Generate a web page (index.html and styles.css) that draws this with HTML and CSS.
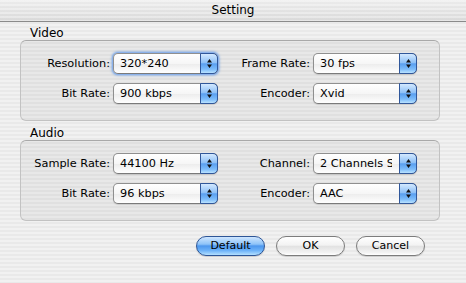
FILE: index.html
```html
<!DOCTYPE html>
<html>
<head>
<meta charset="utf-8">
<link rel="stylesheet" href="styles.css">
</head>
<body>
<div class="window">
  <div class="titlebar">Setting</div>
  <div class="content">
    <section class="group">
      <div class="group-label">Video</div>
      <div class="group-box">
        <span class="lbl">Resolution:</span>
        <div class="popup focus"><span class="val">320*240</span><span class="arrow"><svg width="7" height="11" viewBox="0 0 7 11"><path d="M3.5 1 L6 4.5 L1 4.5 Z M1 6.5 L6 6.5 L3.5 10 Z" fill="#111"/></svg></span></div>
        <span class="lbl">Frame Rate:</span>
        <div class="popup"><span class="val">30 fps</span><span class="arrow"><svg width="7" height="11" viewBox="0 0 7 11"><path d="M3.5 1 L6 4.5 L1 4.5 Z M1 6.5 L6 6.5 L3.5 10 Z" fill="#111"/></svg></span></div>
        <span class="lbl">Bit Rate:</span>
        <div class="popup"><span class="val">900 kbps</span><span class="arrow"><svg width="7" height="11" viewBox="0 0 7 11"><path d="M3.5 1 L6 4.5 L1 4.5 Z M1 6.5 L6 6.5 L3.5 10 Z" fill="#111"/></svg></span></div>
        <span class="lbl">Encoder:</span>
        <div class="popup"><span class="val">Xvid</span><span class="arrow"><svg width="7" height="11" viewBox="0 0 7 11"><path d="M3.5 1 L6 4.5 L1 4.5 Z M1 6.5 L6 6.5 L3.5 10 Z" fill="#111"/></svg></span></div>
      </div>
    </section>
    <section class="group audio">
      <div class="group-label">Audio</div>
      <div class="group-box">
        <span class="lbl">Sample Rate:</span>
        <div class="popup"><span class="val">44100 Hz</span><span class="arrow"><svg width="7" height="11" viewBox="0 0 7 11"><path d="M3.5 1 L6 4.5 L1 4.5 Z M1 6.5 L6 6.5 L3.5 10 Z" fill="#111"/></svg></span></div>
        <span class="lbl">Channel:</span>
        <div class="popup"><span class="val">2 Channels Stereo</span><span class="arrow"><svg width="7" height="11" viewBox="0 0 7 11"><path d="M3.5 1 L6 4.5 L1 4.5 Z M1 6.5 L6 6.5 L3.5 10 Z" fill="#111"/></svg></span></div>
        <span class="lbl">Bit Rate:</span>
        <div class="popup"><span class="val">96 kbps</span><span class="arrow"><svg width="7" height="11" viewBox="0 0 7 11"><path d="M3.5 1 L6 4.5 L1 4.5 Z M1 6.5 L6 6.5 L3.5 10 Z" fill="#111"/></svg></span></div>
        <span class="lbl">Encoder:</span>
        <div class="popup"><span class="val">AAC</span><span class="arrow"><svg width="7" height="11" viewBox="0 0 7 11"><path d="M3.5 1 L6 4.5 L1 4.5 Z M1 6.5 L6 6.5 L3.5 10 Z" fill="#111"/></svg></span></div>
      </div>
    </section>
    <div class="buttons">
      <button class="btn default">Default</button>
      <button class="btn">OK</button>
      <button class="btn">Cancel</button>
    </div>
  </div>
</div>
</body>
</html>
```

FILE: styles.css
```css
html, body {
  margin: 0;
  padding: 0;
}
body {
  width: 466px;
  height: 283px;
  overflow: hidden;
  font-family: "DejaVu Sans", "Noto Sans", sans-serif;
  color: #000;
}
.window {
  height: 283px;
  background: repeating-linear-gradient(to bottom, #f1f1f1 0 2px, #e9e9e9 2px 4px);
}
.titlebar {
  height: 21px;
  border-bottom: 1px solid #8a8a8a;
  background:
    repeating-linear-gradient(to bottom, rgba(255,255,255,0.35) 0 2px, rgba(255,255,255,0) 2px 4px),
    linear-gradient(to bottom, #ececec, #d9d9d9);
  text-align: center;
  font-size: 12px;
  line-height: 21px;
}
.content {
  padding: 5px 0 0 20px;
}
.group {
  width: 420px;
}
.audio {
  margin-top: 6px;
}
.group-label {
  height: 13px;
  line-height: 13px;
  font-size: 12px;
  padding-left: 10px;
}
.group-box {
  box-sizing: border-box;
  height: 81px;
  border: 1px solid #c2c2c2;
  border-top-color: #a9a9a9;
  border-radius: 6px;
  background: rgba(0, 0, 0, 0.035);
  padding: 12px 0 16px;
  display: grid;
  grid-template-columns: 89px 105px 89px 104px;
  grid-auto-rows: 21px;
  column-gap: 3px;
  row-gap: 9px;
  align-items: center;
}
.lbl {
  text-align: right;
  font-size: 11.3px;
  white-space: nowrap;
}
.popup {
  box-sizing: border-box;
  height: 21px;
  display: flex;
  align-items: stretch;
  border: 1px solid #8f8f8f;
  border-bottom-color: #7a7a7a;
  border-radius: 5px;
  background: linear-gradient(to bottom, #ffffff, #f6f6f6 50%, #ececec 51%, #ffffff);
  box-shadow: 0 1px 1px rgba(0, 0, 0, 0.12);
  font-size: 11.3px;
}
.popup.focus {
  box-shadow: 0 0 0 1px #8cb2ea, 0 0 2px 2px rgba(110, 160, 230, 0.55);
}
.val {
  flex: 1;
  min-width: 0;
  overflow: hidden;
  white-space: nowrap;
  padding-left: 6px;
  margin-right: 7px;
  line-height: 19px;
}
.arrow {
  width: 16px;
  flex: none;
  display: flex;
  align-items: center;
  justify-content: center;
  margin: -1px -1px -1px 0;
  border: 1px solid #30579a;
  border-radius: 0 5px 5px 0;
  background: linear-gradient(to bottom, #d4e9ff 0%, #8fc1f7 45%, #5a9ff0 52%, #7cbcfb 80%, #b9e2ff 100%);
}
.buttons {
  display: flex;
  justify-content: flex-end;
  gap: 11px;
  width: 405px;
  margin-top: 15px;
}
.btn {
  box-sizing: border-box;
  width: 69px;
  height: 20px;
  padding: 0;
  border: 1px solid #7c7c7c;
  border-radius: 10px;
  background: linear-gradient(to bottom, #ffffff, #f3f3f3 45%, #e2e2e2 52%, #f2f2f2 85%, #ffffff);
  box-shadow: 0 1px 1px rgba(0, 0, 0, 0.15);
  font-family: "DejaVu Sans", "Noto Sans", sans-serif;
  font-size: 11px;
  line-height: 18px;
  color: #000;
}
.btn.default {
  border-color: #2d5596;
  background: linear-gradient(to bottom, #cfe6ff 0%, #8ec3f8 40%, #4d97ee 50%, #6db2f8 75%, #b3e0ff 100%);
}
```
